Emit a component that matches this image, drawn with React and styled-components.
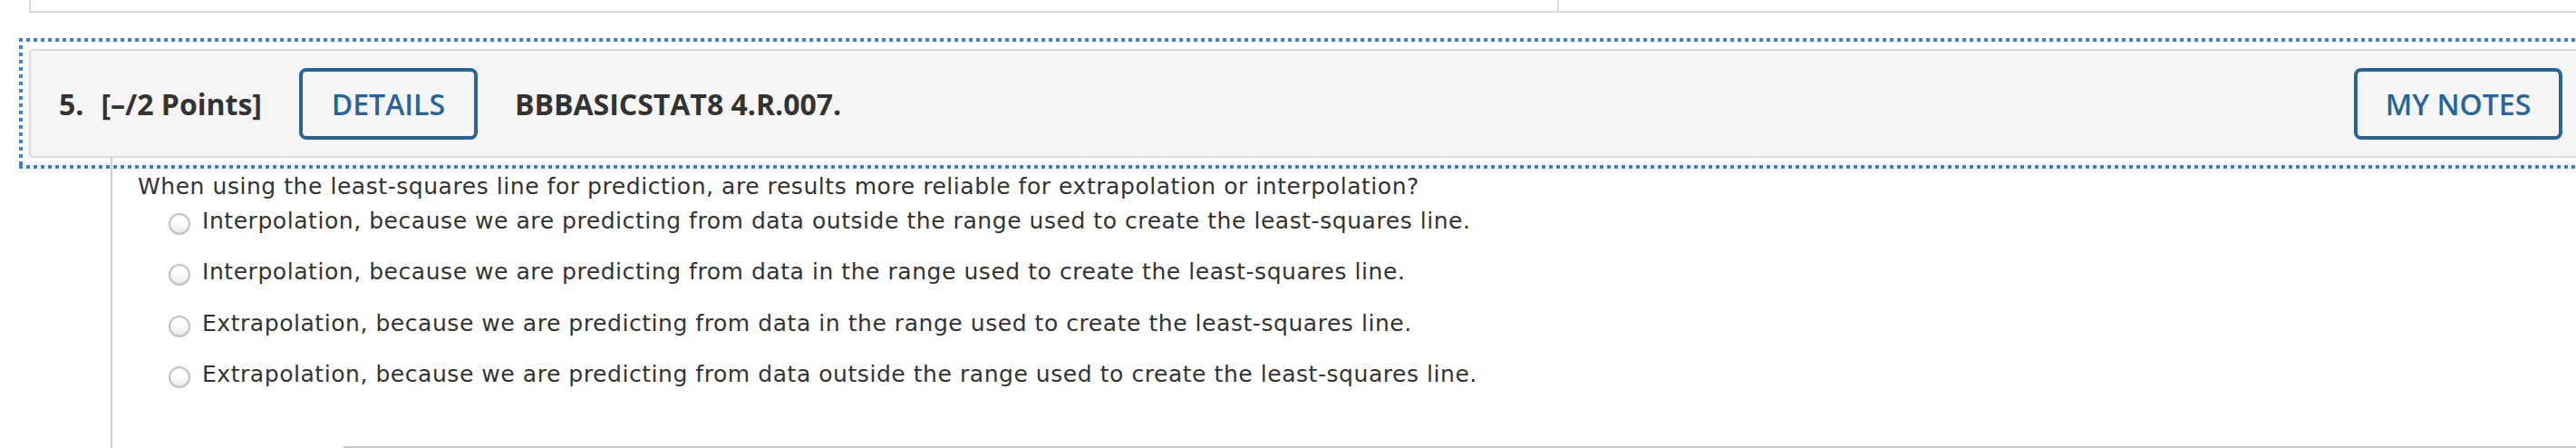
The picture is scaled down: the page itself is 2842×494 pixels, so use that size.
import styled, { createGlobalStyle } from 'styled-components';

const GlobalStyle = createGlobalStyle`
  html, body {
    margin: 0;
    padding: 0;
    background: #fff;
    overflow: hidden;
  }
`;

const Page = styled.div`
  width: 2900px;
  height: 494px;
  overflow: hidden;
  font-family: 'DejaVu Sans', Verdana, sans-serif;
  color: #333;
`;

const TopStrip = styled.div`
  display: grid;
  grid-template-columns: 1686px 1fr;
  margin-left: 32px;
  height: 12px;
  border-left: 2px solid #dcdcdc;
  border-bottom: 2px solid #dcdcdc;
`;

const TopCell = styled.div`
  border-right: ${({ divided }) => (divided ? '2px solid #dcdcdc' : 'none')};
`;

const Question = styled.section`
  margin-top: 40px;
`;

const dots = (dir) => `repeating-linear-gradient(${dir}, #3b7fdf 0 4px, transparent 4px 8px)`;

const Header = styled.header`
  position: relative;
  box-sizing: border-box;
  display: flex;
  align-items: center;
  margin-left: 32px;
  width: 2828px;
  height: 120px;
  padding: 0 31px;
  background: #f5f5f5;
  border: 2px solid #dcdcdc;
  border-radius: 4px;
  font-family: 'Open Sans', 'Liberation Sans', sans-serif;

  &::before {
    content: '';
    position: absolute;
    top: -14px;
    left: -13px;
    right: -13px;
    bottom: -14px;
    pointer-events: none;
    background:
      ${dots('90deg')} top left / 100% 4px no-repeat,
      ${dots('90deg')} bottom left / 100% 4px no-repeat,
      ${dots('180deg')} top left / 4px 100% no-repeat,
      ${dots('180deg')} top right / 4px 100% no-repeat;
  }
`;

const Number = styled.span`
  font-size: 32px;
  font-weight: 700;
  color: #333;
  margin-right: 19px;
  white-space: nowrap;
`;

const Points = styled.span`
  font-size: 32px;
  font-weight: 700;
  color: #333;
  margin-right: 41px;
  white-space: nowrap;
`;

const Title = styled.span`
  font-size: 32px;
  font-weight: 700;
  color: #333;
  margin-left: 41px;
  white-space: nowrap;
`;

const OutlineButton = styled.button`
  box-sizing: border-box;
  display: flex;
  align-items: center;
  justify-content: center;
  width: ${({ width }) => width}px;
  height: 79px;
  margin-left: ${({ pushRight }) => (pushRight ? 'auto' : '0')};
  padding: 0;
  background: transparent;
  border: 4px solid #28649a;
  border-radius: 8px;
  color: #28649a;
  font-family: 'Open Sans', 'Liberation Sans', sans-serif;
  font-size: 32px;
  font-weight: 600;
  cursor: pointer;
`;

const Body = styled.div`
  margin-left: 122px;
  border-left: 2px solid #cfcfcf;
  padding: 18px 0 0 28px;
  font-size: 25px;
  letter-spacing: 0.55px;
  line-height: 28px;
`;

const Prompt = styled.p`
  margin: 0;
  white-space: nowrap;
`;

const Options = styled.ul`
  list-style: none;
  margin: 10px 0 0;
  padding: 0 0 0 34px;
  display: flex;
  flex-direction: column;
  gap: 27.3px;
`;

const Option = styled.li`
  display: flex;
  align-items: flex-start;
  gap: 13px;
  white-space: nowrap;
`;

const Radio = styled.span`
  box-sizing: border-box;
  flex: none;
  width: 24px;
  height: 24px;
  margin-top: 5px;
  border-radius: 50%;
  border: 2px solid #c2c2c2;
  background: linear-gradient(#ffffff 40%, #e9e9e9);
  box-shadow: inset 0 -1px 1px rgba(0, 0, 0, 0.06);
`;

const AnswerPanel = styled.div`
  margin: 64px 0 0 227px;
  width: 2600px;
  height: 80px;
  border-top: 3px solid #cacaca;
  border-left: 3px solid #cacaca;
`;

const options = [
  'Interpolation, because we are predicting from data outside the range used to create the least-squares line.',
  'Interpolation, because we are predicting from data in the range used to create the least-squares line.',
  'Extrapolation, because we are predicting from data in the range used to create the least-squares line.',
  'Extrapolation, because we are predicting from data outside the range used to create the least-squares line.',
];

const App = () => (
  <Page>
    <GlobalStyle />
    <TopStrip>
      <TopCell divided />
      <TopCell />
    </TopStrip>
    <Question>
      <Header>
        <Number>5.</Number>
        <Points>[–/2 Points]</Points>
        <OutlineButton width={197}>DETAILS</OutlineButton>
        <Title>BBBASICSTAT8 4.R.007.</Title>
        <OutlineButton width={230} pushRight>
          MY NOTES
        </OutlineButton>
      </Header>
      <Body>
        <Prompt>
          When using the least-squares line for prediction, are results more reliable for extrapolation or
          interpolation?
        </Prompt>
        <Options>
          {options.map((text) => (
            <Option key={text}>
              <Radio />
              <span>{text}</span>
            </Option>
          ))}
        </Options>
        <AnswerPanel />
      </Body>
    </Question>
  </Page>
);

export default App;
